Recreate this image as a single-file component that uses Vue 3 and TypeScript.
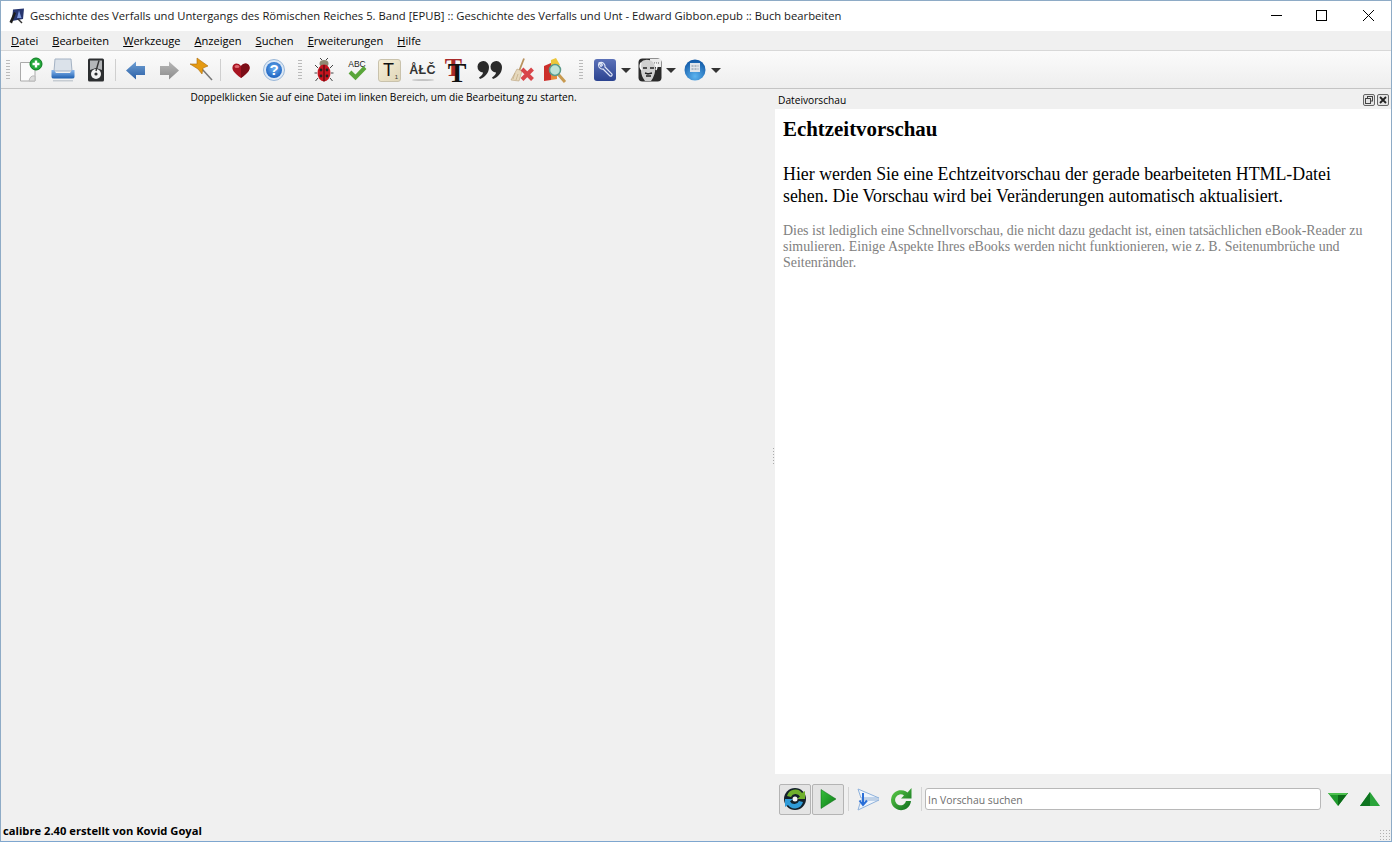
<script setup lang="ts">
const menus: { key: string; rest: string }[] = [
  { key: 'D', rest: 'atei' },
  { key: 'B', rest: 'earbeiten' },
  { key: 'W', rest: 'erkzeuge' },
  { key: 'A', rest: 'nzeigen' },
  { key: 'S', rest: 'uchen' },
  { key: 'E', rest: 'rweiterungen' },
  { key: 'H', rest: 'ilfe' },
]
</script>

<template>
  <div class="win">
    <header class="titlebar">
      <svg class="appicon" width="16" height="16" viewBox="0 0 16 16">
        <path d="M4 1.500 L15 0.500 L14 11 L3 13 Z" fill="#26356e" />
        <path d="M10 2.500 L12.500 10 L8 10 Z" fill="#7f9ade" />
        <path d="M0.500 14 L5 4 L7 5 L3 15.500 Z" fill="#1c1c1c" />
        <path d="M9 11 L13 15" stroke="#333" stroke-width="1.500" />
      </svg>
      <span class="title">Geschichte des Verfalls und Untergangs des Römischen Reiches 5. Band [EPUB] :: Geschichte des Verfalls und Unt - Edward Gibbon.epub :: Buch bearbeiten</span>
      <div class="wbtns">
        <svg width="46" height="31" viewBox="0 0 46 31"><path d="M18 15.500 H29" stroke="#000" fill="none" /></svg>
        <svg width="46" height="31" viewBox="0 0 46 31"><rect x="17.500" y="10.500" width="10" height="10" stroke="#000" fill="none" /></svg>
        <svg width="46" height="31" viewBox="0 0 46 31"><path d="M18 10 L29 21 M29 10 L18 21" stroke="#000" fill="none" /></svg>
      </div>
    </header>

    <nav class="menubar">
      <span v-for="m in menus" :key="m.key" class="menu"><u>{{ m.key }}</u>{{ m.rest }}</span>
    </nav>

    <div class="toolbar">
      <i class="grip"></i>

      <div class="tb">
        <svg width="26" height="26" viewBox="0 0 26 26">
          <path d="M2.500 5.500 H17 V24 H9 L2.500 24 Z" fill="#fbfbfb" stroke="#aaa" />
          <path d="M11 24 Q12 18 17 19 L17 24 Z" fill="#ddd" stroke="#bbb" />
          <circle cx="18" cy="7" r="6" fill="#22a83a" stroke="#0c7a20" />
          <path d="M18 3.500 V10.500 M14.500 7 H21.500" stroke="#fff" stroke-width="2.400" />
        </svg>
      </div>
      <div class="tb">
        <svg class="nudge" width="26" height="26" viewBox="0 0 26 26">
          <defs>
            <linearGradient id="gp" x1="0" y1="0" x2="0" y2="1"><stop offset="0" stop-color="#8ab8ee" /><stop offset="1" stop-color="#1d5fb0" /></linearGradient>
          </defs>
          <path d="M5 2 H21 L22 14 H4 Z" fill="#dbe2ea" stroke="#a4b2c4" />
          <path d="M1.500 13 H4 L6 16 H20 L22 13 H24.500 V20 Q24.500 21.500 22 21.500 H4 Q1.500 21.500 1.500 20 Z" fill="url(#gp)" />
          <rect x="3" y="23" width="20" height="1.500" fill="#c6ccd2" />
        </svg>
      </div>
      <div class="tb">
        <svg class="nudge" width="26" height="26" viewBox="0 0 26 26">
          <rect x="5" y="1.500" width="16" height="23" rx="1.500" fill="#2c2e30" />
          <path d="M7 3.500 H19 V13 L13 11 L7 13 Z" fill="#b4b6b8" />
          <circle cx="13" cy="17" r="5" fill="#f2f2f2" />
          <circle cx="13" cy="17" r="1.600" fill="#2c2e30" />
          <path d="M16 3.500 L13 14" stroke="#333" stroke-width="1.400" />
        </svg>
      </div>
      <i class="sep"></i>

      <div class="tb">
        <svg width="24" height="24" viewBox="0 0 24 24">
          <defs><linearGradient id="gb" x1="0" y1="0" x2="0" y2="1"><stop offset="0" stop-color="#6f9fd4" /><stop offset="1" stop-color="#2a5fa5" /></linearGradient></defs>
          <path d="M2 12.500 L12 3.500 V8 H21 V17 H12 V21.500 Z" fill="url(#gb)" />
        </svg>
      </div>
      <div class="tb">
        <svg width="24" height="24" viewBox="0 0 24 24">
          <defs><linearGradient id="gg" x1="0" y1="0" x2="0" y2="1"><stop offset="0" stop-color="#b8b8b8" /><stop offset="1" stop-color="#8c8c8c" /></linearGradient></defs>
          <path d="M22 12.500 L12 3.500 V8 H3 V17 H12 V21.500 Z" fill="url(#gg)" />
        </svg>
      </div>
      <div class="tb">
        <svg width="26" height="26" viewBox="0 0 26 26">
          <path d="M13 12 L23 23" stroke="#777" stroke-width="1.500" />
          <path d="M1 7 L8 7 L8 1 L12 4 L19 9 L14 11 L13 17 L9 12 Z" fill="#e59a12" stroke="#a96a08" stroke-width=".6" />
        </svg>
      </div>
      <i class="sep"></i>

      <div class="tb">
        <svg width="20" height="20" viewBox="0 0 20 20">
          <path d="M10 18 C3 13 1 10 1.500 7 C2 3 7 2 10 6 C13 2 18 3 18.500 7 C19 10 17 13 10 18 Z" fill="#a81422" />
          <path d="M10 6 C13 2 18 3 18.500 7 C19 10 17 13 10 18 Z" fill="#7c0e18" />
          <ellipse cx="6" cy="6.500" rx="2.500" ry="1.500" fill="#e06a72" />
        </svg>
      </div>
      <div class="tb">
        <svg width="24" height="24" viewBox="0 0 24 24">
          <defs><radialGradient id="gh" cx=".5" cy=".4" r=".6"><stop offset="0" stop-color="#6cb0f0" /><stop offset="1" stop-color="#1c62c0" /></radialGradient></defs>
          <circle cx="12" cy="12" r="10.500" fill="#dbe8f6" stroke="#9bb8d8" />
          <circle cx="12" cy="12" r="8" fill="url(#gh)" />
          <text x="12" y="17" text-anchor="middle" class="qm">?</text>
        </svg>
      </div>
      <i class="dots wide"></i>

      <div class="tb">
        <svg width="24" height="26" viewBox="0 0 24 26">
          <path d="M6 11 L3 8 M18 11 L21 8 M5 16 H2.500 M19 16 H21.500 M6 21 L3.500 24 M18 21 L20.500 24 M10 3 L8 1 M14 3 L16 1" stroke="#444" />
          <ellipse cx="12" cy="6.500" rx="4.500" ry="3.500" fill="#8e8a72" />
          <ellipse cx="12" cy="16" rx="6.500" ry="8.500" fill="#c8141e" />
          <path d="M12 8 V24.500" stroke="#3c0508" />
          <circle cx="9" cy="13" r="1.400" fill="#222" /><circle cx="15" cy="13" r="1.400" fill="#222" />
          <circle cx="9" cy="19" r="1.400" fill="#222" /><circle cx="15" cy="19" r="1.400" fill="#222" />
        </svg>
      </div>
      <div class="tb">
        <svg width="24" height="24" viewBox="0 0 24 24">
          <text x="12" y="9" text-anchor="middle" class="abc">ABC</text>
          <path d="M5 14 L10.500 19.500 L20 9.500" stroke="#5aa63a" stroke-width="4" fill="none" />
        </svg>
      </div>
      <div class="tb">
        <div class="tile"><span class="tile-t">T</span><span class="tile-s">1</span></div>
      </div>
      <div class="tb">
        <div class="alc"><span>ÅŁČ</span><i></i></div>
      </div>
      <div class="tb">
        <svg class="ttbox" width="32" height="36" viewBox="0 0 32 36">
          <text x="13.500" y="24" text-anchor="middle" class="tt red">T</text>
          <text x="17" y="30" text-anchor="middle" class="tt">T</text>
        </svg>
      </div>
      <div class="tb">
        <svg class="nudge-r" width="28" height="24" viewBox="0 0 28 24">
          <path d="M7.500 3 A6 6 0 0 1 13 9 C13 15 9 19 4 21 L3 19.500 C5.500 18 7 16 7 14.500 A5.500 5.500 0 0 1 7.500 3 Z" fill="#2b2b2b" />
          <path d="M20.500 3 A6 6 0 0 1 26 9 C26 15 22 19 17 21 L16 19.500 C18.500 18 20 16 20 14.500 A5.500 5.500 0 0 1 20.500 3 Z" fill="#2b2b2b" />
        </svg>
      </div>
      <div class="tb">
        <svg class="nudge-r" width="26" height="26" viewBox="0 0 26 26">
          <path d="M14 1.500 L9.500 13" stroke="#b8925e" stroke-width="1.800" />
          <path d="M7 12 L12 14 L9 24 L1 23 Z" fill="#e6d8bc" stroke="#b8a078" stroke-width=".6" />
          <path d="M5 16 L3 22 M8 17 L6 23" stroke="#c0aa84" stroke-width=".7" />
          <path d="M12 12 L22.500 22.500 M22.500 12 L12 22.500" stroke="#d8454a" stroke-width="4" />
        </svg>
      </div>
      <div class="tb">
        <svg width="26" height="26" viewBox="0 0 26 26">
          <path d="M2 9 L9 6 V23 L2 24 Z" fill="#cc2f2a" />
          <path d="M9 3 L14 1 L18 8 L9 10 Z" fill="#ecc63a" />
          <path d="M9 10 L15 9 V22 L9 23 Z" fill="#e88a3a" />
          <path d="M16 17 L23 25" stroke="#c89a50" stroke-width="3" />
          <circle cx="13" cy="13" r="5.500" fill="#bfe3d8" stroke="#5a9a8a" stroke-width="1.500" />
        </svg>
      </div>
      <i class="dots"></i>

      <div class="tbm">
        <svg width="24" height="24" viewBox="0 0 24 24">
          <defs><linearGradient id="gw" x1="0" y1="0" x2="0" y2="1"><stop offset="0" stop-color="#5b71b8" /><stop offset="1" stop-color="#2b4390" /></linearGradient></defs>
          <rect x="1" y="1" width="22" height="22" rx="3" fill="url(#gw)" />
          <path d="M6 5 A4 4 0 0 0 10 11 L17 18 A1.500 1.500 0 0 0 19 16 L12 9 A4 4 0 0 0 7 4.500 L9.500 7 L8 8.500 Z" fill="none" stroke="#dfe6f6" stroke-width="1.200" />
        </svg>
        <i class="caret"></i>
      </div>
      <div class="tbm">
        <svg width="24" height="24" viewBox="0 0 24 24">
          <rect x="0.500" y="0.500" width="23" height="23" rx="4" fill="#2a2a2a" />
          <rect x="12" y="1" width="11" height="8" fill="#ececec" />
          <path d="M14 5 H21" stroke="#555" stroke-dasharray="1 1" />
          <path d="M2 5 Q6 0.500 11 2 Q16 3 17 9 Q18 16 13 23 H7 Q3 18 3 12 Z" fill="#d0d0d0" />
          <path d="M5 10 H9 M12 10 H16 M7 15 L10 16 L14 15 M8 18 H13" stroke="#222" stroke-width="1.400" />
          <path d="M3 5 Q1 9 4 12 M17 5 Q20 8 18 12" stroke="#f6f6f6" stroke-width="1.600" fill="none" />
        </svg>
        <i class="caret"></i>
      </div>
      <div class="tbm">
        <svg width="24" height="24" viewBox="0 0 24 24">
          <defs><radialGradient id="gc" cx=".5" cy=".8" r=".75"><stop offset="0" stop-color="#5cb4f0" /><stop offset="1" stop-color="#125aa8" /></radialGradient></defs>
          <circle cx="12" cy="12" r="10.500" fill="url(#gc)" />
          <path d="M7 5 H17 V14 H7 Z" fill="#dfe4ea" />
          <path d="M8.500 8 H15.500 M8.500 11 H15.500" stroke="#7a8a9a" stroke-dasharray="2 1" />
        </svg>
        <i class="caret"></i>
      </div>
    </div>

    <main class="body">
      <section class="editor">
        <p class="hint">Doppelklicken Sie auf eine Datei im linken Bereich, um die Bearbeitung zu starten.</p>
        <i class="splitter"></i>
      </section>

      <aside class="dock">
        <div class="dock-title">
          <span>Dateivorschau</span>
          <div class="dock-btns">
            <svg width="12" height="12" viewBox="0 0 12 12">
              <rect x=".5" y=".5" width="11" height="11" rx="1.500" fill="#e4e4e4" stroke="#666" />
              <rect x="4.500" y="2.500" width="5" height="4.500" fill="none" stroke="#444" />
              <rect x="2.500" y="4.500" width="5" height="5" fill="#e4e4e4" stroke="#444" />
            </svg>
            <svg width="12" height="12" viewBox="0 0 12 12">
              <rect x=".5" y=".5" width="11" height="11" rx="1.500" fill="#e4e4e4" stroke="#666" />
              <path d="M3 3 L9 9 M9 3 L3 9" stroke="#222" stroke-width="1.800" />
            </svg>
          </div>
        </div>

        <article class="preview">
          <h1>Echtzeitvorschau</h1>
          <p class="lead">Hier werden Sie eine Echtzeitvorschau der gerade bearbeiteten HTML-Datei sehen. Die Vorschau wird bei Veränderungen automatisch aktualisiert.</p>
          <p class="note">Dies ist lediglich eine Schnellvorschau, die nicht dazu gedacht ist, einen tatsächlichen eBook-Reader zu simulieren. Einige Aspekte Ihres eBooks werden nicht funktionieren, wie z. B. Seitenumbrüche und Seitenränder.</p>
        </article>

        <div class="findbar">
          <div class="fb on">
            <svg width="24" height="24" viewBox="0 0 24 24">
              <circle cx="12" cy="12" r="11" fill="#14202a" />
              <path d="M4 9 A8.500 8.500 0 0 1 19 6 L22 4 V12 H14 L17 9.500 A5 5 0 0 0 8 10 Z" fill="#6fb02c" />
              <path d="M20 15 A8.500 8.500 0 0 1 5 18 L2 20 V12 H10 L7 14.500 A5 5 0 0 0 16 14 Z" fill="#2f9bd8" />
              <circle cx="12" cy="12" r="2.500" fill="#f4f4f4" />
            </svg>
          </div>
          <div class="fb on">
            <svg width="22" height="24" viewBox="0 0 22 24">
              <defs><linearGradient id="gpl" x1="0" y1="0" x2="1" y2="1"><stop offset="0" stop-color="#35c03a" /><stop offset="1" stop-color="#0e7a18" /></linearGradient></defs>
              <path d="M4 2.500 L19 12 L4 21.500 Z" fill="url(#gpl)" stroke="#0b6a14" stroke-width=".5" />
            </svg>
          </div>
          <i class="fsep"></i>
          <div class="fi">
            <svg width="24" height="24" viewBox="0 0 24 24">
              <path d="M2 2 L23 11 L5 11 Z M5 13 L23 13 L2 23 Z" fill="#eef4fb" stroke="#8fb2dc" />
              <path d="M7 6 V17 M3.500 13.500 L7 18 L11 13.500" stroke="#2a6fd8" stroke-width="2" fill="none" />
            </svg>
          </div>
          <div class="fi">
            <svg width="26" height="26" viewBox="0 0 26 26">
              <defs><linearGradient id="gr" x1="0" y1="0" x2="1" y2="1"><stop offset="0" stop-color="#5fd04a" /><stop offset="1" stop-color="#0c6a1c" /></linearGradient></defs>
              <path d="M19.500 6.500 A10 10 0 1 0 23 15 H18 A5.500 5.500 0 1 1 16 9.500 L13 12.500 H23.500 V2 Z" fill="url(#gr)" />
            </svg>
          </div>
          <i class="fsep short"></i>
          <input class="find" type="text" placeholder="In Vorschau suchen" />
          <div class="fa">
            <svg width="22" height="14" viewBox="0 0 22 14">
              <path d="M1 1 H21 L11 14 Z" fill="#1f9a2c" /><path d="M11 1 H21 L11 14 Z" fill="#0c6a18" /><path d="M1 1 H21 L19 3 H3 Z" fill="#4cc04e" />
            </svg>
          </div>
          <div class="fa">
            <svg width="22" height="14" viewBox="0 0 22 14">
              <path d="M1 14 H21 L11 0 Z" fill="#2aa43a" /><path d="M11 0 L1 14 H11 Z" fill="#0e7420" />
            </svg>
          </div>
        </div>
      </aside>
    </main>

    <footer class="status">
      <span>calibre 2.40 erstellt von Kovid Goyal</span>
      <i class="sizegrip"></i>
    </footer>
  </div>
</template>

<style>
html, body { margin: 0; padding: 0; overflow: hidden; }
</style>

<style scoped>
.win {
  width: 1392px;
  height: 842px;
  box-sizing: border-box;
  border: 1px solid #8eabc6;
  border-bottom-color: #7ea6cf;
  display: flex;
  flex-direction: column;
  background: #f0f0f0;
  font-family: "Open Sans", "Noto Sans", sans-serif;
  font-size: 11px;
  color: #000;
}
.titlebar {
  height: 30px;
  background: #fff;
  display: flex;
  align-items: center;
  flex: none;
}
.appicon { margin-left: 8px; margin-right: 5px; margin-top: -1px; }
.title { font-size: 11.250px; color: #1a1a1a; white-space: nowrap; margin-top: -2px; }
.wbtns { margin-left: auto; display: flex; margin-top: -1px; }
.menubar {
  height: 20px;
  box-sizing: border-box;
  padding-bottom: 1px;
  flex: none;
  display: flex;
  align-items: center;
  padding-left: 3px;
  background: #f0f0f0;
  border-bottom: 1px solid #d8d8d8;
}
.menu { padding: 0 7px; font-size: 11.100px; white-space: nowrap; }
.toolbar {
  height: 38px;
  flex: none;
  box-sizing: border-box;
  display: flex;
  align-items: center;
  padding-left: 5px;
  padding-top: 1px;
  background: linear-gradient(#fbfbfb, #eeeeee);
  border-bottom: 1px solid #c4c4c4;
}
.grip {
  width: 4px;
  height: 22px;
  margin-right: 4px;
  background-image: radial-gradient(#bbb 0.7px, transparent 0.8px);
  background-size: 2px 3px;
}
.tb {
  width: 33px;
  height: 30px;
  flex: none;
  display: flex;
  align-items: center;
  justify-content: center;
}
.nudge { margin-right: 1px; }
.nudge-r { margin-left: 2px; }
.ttbox { flex: none; margin-left: 1px; }
.tbm {
  width: 45px;
  height: 30px;
  flex: none;
  display: flex;
  align-items: center;
  gap: 4px;
}
.caret {
  width: 0;
  height: 0;
  border-left: 5px solid transparent;
  border-right: 5px solid transparent;
  border-top: 5px solid #333;
}
.sep {
  width: 1px;
  height: 22px;
  margin: 0 3px 0 2px;
  background: #cfcfcf;
  flex: none;
}
.dots {
  width: 4px;
  height: 22px;
  margin: 0 9.500px 0 8px;
  flex: none;
  background-image: radial-gradient(#bbb 0.7px, transparent 0.8px);
  background-size: 2px 3px;
}
.dots.wide { margin: 0 5px 0 8px; }
.qm { font: bold 15px "Liberation Sans", sans-serif; fill: #fff; }
.abc { font: 8.500px "Liberation Sans", sans-serif; fill: #222; }
.tile {
  width: 23px;
  height: 23px;
  box-sizing: border-box;
  border: 1px solid #c9c2ac;
  border-radius: 3px;
  background: linear-gradient(135deg, #f6efd8, #e0d6b8);
  position: relative;
  display: flex;
  justify-content: center;
  align-items: center;
}
.tile-t { font: 18px "Liberation Sans", sans-serif; color: #111; margin-right: 2px; }
.tile-s { position: absolute; right: 2px; bottom: 1px; font: 6px "Liberation Sans", sans-serif; color: #333; }
.alc { display: flex; flex-direction: column; align-items: center; line-height: 12px; }
.alc span { font: bold 12.500px "Liberation Sans", sans-serif; color: #333; letter-spacing: .3px; margin-top: 3px; }
.alc i { width: 22px; height: 2px; background: #c4c4c4; border-radius: 50%; margin-top: 2px; }
.tt { font: bold 28px "Liberation Serif", serif; fill: #111; }
.tt.red { fill: #a82a2a; font-size: 26px; }
.body { flex: 1; display: flex; min-height: 0; }
.editor {
  width: 774px;
  flex: none;
  position: relative;
}
.hint { margin: 2px 0 0; padding-right: 9px; text-align: center; font-size: 10.150px; line-height: 13px; white-space: nowrap; }
.splitter {
  position: absolute;
  right: 0;
  top: 358px;
  width: 3px;
  height: 18px;
  background-image: radial-gradient(#aaa 0.7px, transparent 0.8px);
  background-size: 3px 3px;
}
.dock { flex: 1; display: flex; flex-direction: column; min-width: 0; }
.dock-title {
  height: 20px;
  flex: none;
  display: flex;
  align-items: center;
  padding: 1px 2px 0 3px;
  box-sizing: border-box;
  font-size: 10.200px;
}
.dock-btns { margin-left: auto; display: flex; gap: 2px; }
.preview {
  flex: 1;
  background: #fff;
  padding: 8px 8px;
  margin: 0;
  font-family: "Liberation Serif", "Times New Roman", serif;
  overflow: hidden;
}
h1 { margin: 0; font-size: 20.900px; line-height: 24px; font-weight: bold; }
.lead { margin: 22px 0 0; max-width: 570px; font-size: 17.850px; line-height: 22px; }
.note { margin: 16px 0 0; font-size: 13.950px; line-height: 16px; color: #808080; }
.findbar {
  height: 48px;
  box-sizing: border-box;
  padding-top: 2px;
  flex: none;
  display: flex;
  align-items: center;
  padding-left: 4px;
}
.fb {
  width: 32px;
  height: 31px;
  box-sizing: border-box;
  flex: none;
  border: 1px solid #b4b4b4;
  border-radius: 2px;
  background: #e4e4e4;
  display: flex;
  align-items: center;
  justify-content: center;
  margin-right: 1px;
}
.fsep { width: 1px; height: 24px; background: #d4d4d4; margin: 0 2px 0 3px; flex: none; }
.fsep.short { margin: 0 3px 0 4px; }
.fi { width: 33px; height: 30px; flex: none; display: flex; align-items: center; justify-content: center; }
.find {
  width: 396px;
  height: 22px;
  box-sizing: border-box;
  flex: none;
  border: 1px solid #b8b8b8;
  border-radius: 3px;
  padding: 1px 2px 0;
  margin-right: 1px;
  background: #fff;
  font: 10.400px "Open Sans", "Noto Sans", sans-serif;
  outline: none;
}
.find::placeholder { color: #6e6e6e; opacity: 1; }
.fa { width: 32px; flex: none; display: flex; justify-content: center; }
.status {
  height: 19px;
  flex: none;
  box-sizing: border-box;
  padding-bottom: 2px;
  display: flex;
  align-items: center;
  justify-content: space-between;
  padding-left: 2px;
  font-weight: 700;
  font-size: 11.200px;
}
.sizegrip {
  width: 12px;
  height: 12px;
  align-self: flex-end;
  margin-bottom: -2px;
  background-image: radial-gradient(#b0b0b0 0.7px, transparent 0.8px);
  background-size: 3px 3px;
}
</style>
